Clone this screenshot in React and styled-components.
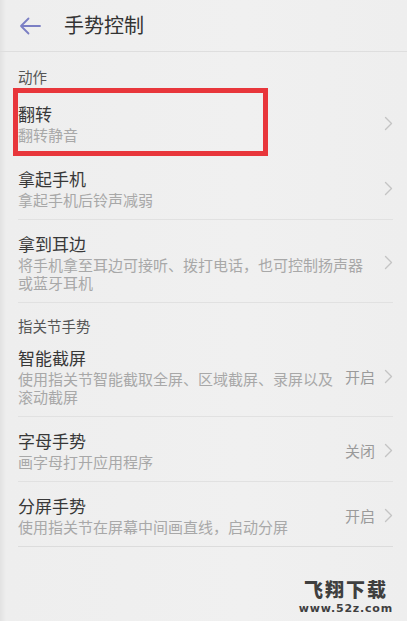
import React from 'react';
import styled, { createGlobalStyle } from 'styled-components';

const GlobalStyle = createGlobalStyle`
  html, body {
    margin: 0;
    padding: 0;
    background: #efefef;
  }
  body {
    font-family: "Noto Sans CJK SC", "Noto Sans", sans-serif;
  }
`;

const Page = styled.div`
  position: relative;
  width: 407px;
  height: 621px;
  overflow: hidden;
  background: linear-gradient(90deg, #e2e2e2 0px, #eeeeee 6px, #f0f0f0 60%, #eeeeee 100%);
`;

const Header = styled.div`
  display: flex;
  align-items: center;
  height: 51px;
  padding-left: 19px;
  border-bottom: 1px solid #dedede;
`;

const BackButton = styled.div`
  display: flex;
  align-items: center;
  width: 45px;
  height: 20px;
`;

const Title = styled.div`
  font-size: 20px;
  line-height: 24px;
  color: #333;
  margin-top: -2px;
`;

const SectionLabel = styled.div`
  font-size: 14.5px;
  line-height: 16px;
  color: #555;
  padding: ${p => p.$top}px 18px ${p => p.$bottom}px;
`;

const Row = styled.div`
  position: relative;
  display: flex;
  align-items: center;
  margin: 0 14px 0 18px;
  padding: 13px 0 10px;
  border-bottom: 1px solid ${p => (p.$last ? '#dcdcdc' : '#e1e1e1')};
  ${p => p.$hideLine && 'border-bottom-color: transparent;'}
`;

const TextBlock = styled.div`
  flex: 1;
  min-width: 0;
`;

const ItemTitle = styled.div`
  font-size: 17px;
  line-height: 22px;
  color: #383838;
  margin-bottom: 1px;
`;

const ItemSub = styled.div`
  font-size: 15px;
  line-height: 18px;
  color: #a8a8a8;
`;

const Side = styled.div`
  display: flex;
  align-items: center;
  margin-left: 10px;
  flex-shrink: 0;
`;

const Value = styled.span`
  font-size: 15px;
  color: #9a9a9a;
  margin-right: 9px;
`;

const Highlight = styled.div`
  position: absolute;
  left: -5px;
  top: -2px;
  width: 245px;
  height: 58px;
  border: 5.5px solid #e8363b;
  pointer-events: none;
`;

const Watermark = styled.div`
  position: absolute;
  right: 14px;
  bottom: 6px;
  display: flex;
  flex-direction: column;
  align-items: center;
  gap: 2px;
  color: #3f3f3f;
`;

const MarkName = styled.div`
  font-size: 19px;
  line-height: 22px;
  font-weight: 900;
  letter-spacing: 2px;
`;

const MarkUrl = styled.div`
  font-family: "DejaVu Sans", sans-serif;
  font-size: 11px;
  line-height: 13px;
  font-weight: bold;
  letter-spacing: 0.8px;
`;

const BackArrow = () => (
  <svg width="22" height="18" viewBox="0 0 22 18">
    <path d="M21 9H2M9.5 1.5L2 9l7.5 7.5" fill="none" stroke="#7b7fc4" strokeWidth="1.8" strokeLinecap="round" strokeLinejoin="round" />
  </svg>
);

const Chevron = () => (
  <svg width="9" height="15" viewBox="0 0 9 15">
    <polyline points="1.5,1.5 7.5,7.5 1.5,13.5" fill="none" stroke="#c4c4c4" strokeWidth="1.4" strokeLinecap="round" strokeLinejoin="round" />
  </svg>
);

function Item({ title, sub, value, highlight, last }) {
  return (
    <Row $last={last} $hideLine={highlight}>
      <TextBlock>
        <ItemTitle>{title}</ItemTitle>
        <ItemSub>{sub}</ItemSub>
      </TextBlock>
      <Side>
        {value && <Value>{value}</Value>}
        <Chevron />
      </Side>
      {highlight && <Highlight />}
    </Row>
  );
}

export default function App() {
  return (
    <Page>
      <GlobalStyle />
      <Header>
        <BackButton>
          <BackArrow />
        </BackButton>
        <Title>手势控制</Title>
      </Header>

      <SectionLabel $top={17} $bottom={5}>动作</SectionLabel>
      <Item title="翻转" sub="翻转静音" highlight />
      <Item title="拿起手机" sub="拿起手机后铃声减弱" />
      <Item title="拿到耳边" sub="将手机拿至耳边可接听、拨打电话，也可控制扬声器或蓝牙耳机" />

      <SectionLabel $top={15} $bottom={0}>指关节手势</SectionLabel>
      <Item title="智能截屏" sub="使用指关节智能截取全屏、区域截屏、录屏以及滚动截屏" value="开启" />
      <Item title="字母手势" sub="画字母打开应用程序" value="关闭" />
      <Item title="分屏手势" sub="使用指关节在屏幕中间画直线，启动分屏" value="开启" last />

      <Watermark>
        <MarkName>飞翔下载</MarkName>
        <MarkUrl>www.52z.com</MarkUrl>
      </Watermark>
    </Page>
  );
}
